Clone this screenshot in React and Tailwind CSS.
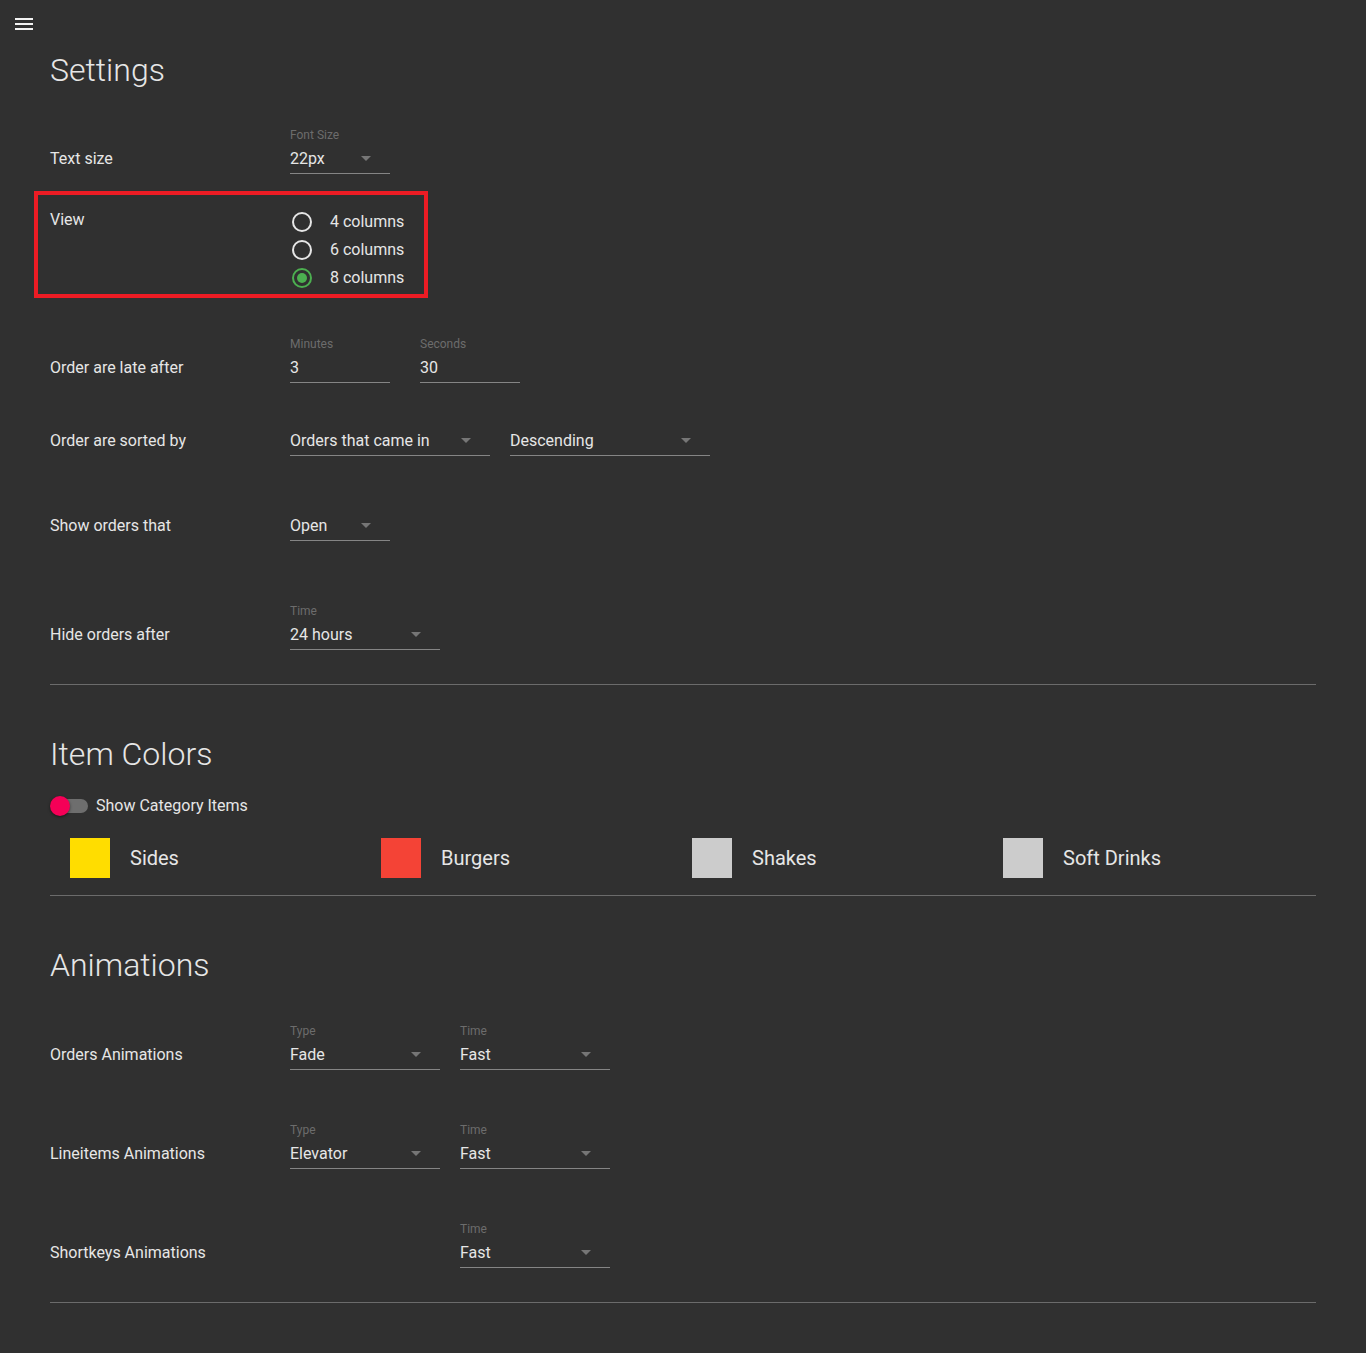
import React from "react";

function Arrow() {
  return (
    <svg width="10" height="5" viewBox="0 0 10 5" className="mr-[19px] shrink-0">
      <path d="M0 0 L10 0 L5 5 Z" fill="#767676" />
    </svg>
  );
}

function Field({ label, value, w, arrow = true }) {
  return (
    <div className={"flex flex-col " + w}>
      {label && (
        <div className="text-[12px] leading-[16px] text-[#6c6c6c] mb-[3px]">{label}</div>
      )}
      <div className="flex items-center justify-between h-[28px] pb-[2px] border-b border-[#858585]">
        <span className="text-[16px] leading-[24px]">{value}</span>
        {arrow && <Arrow />}
      </div>
    </div>
  );
}

function Row({ label, mt, children }) {
  return (
    <div className={"flex items-end " + mt}>
      <div className="w-[240px] pb-[3px] text-[16px] leading-[24px]">{label}</div>
      {children}
    </div>
  );
}

function Radio({ checked, label }) {
  return (
    <div className="flex items-center h-[28px]">
      {checked ? (
        <div className="w-[20px] h-[20px] rounded-full border-2 border-[#4caf50] flex items-center justify-center">
          <div className="w-[10px] h-[10px] rounded-full bg-[#4caf50]" />
        </div>
      ) : (
        <div className="w-[20px] h-[20px] rounded-full border-2 border-[#e6e6e6]" />
      )}
      <span className="ml-[18px] text-[16px] leading-[24px]">{label}</span>
    </div>
  );
}

function Swatch({ color, label }) {
  return (
    <div className="flex items-center gap-[20px]">
      <div className={"w-[40px] h-[40px] " + color} />
      <span className="text-[20px] leading-[24px]">{label}</span>
    </div>
  );
}

export default function App() {
  return (
    <div className="min-h-screen bg-[#303030] text-[#e6e6e6] font-['Roboto',sans-serif] pb-[50px]">
      <div className="h-[54px] pt-[18px] pl-[15px]">
        <svg width="18" height="12" viewBox="0 0 18 12">
          <rect x="0" y="0" width="18" height="2" fill="#f2f2f2" />
          <rect x="0" y="5" width="18" height="2" fill="#f2f2f2" />
          <rect x="0" y="10" width="18" height="2" fill="#f2f2f2" />
        </svg>
      </div>
      <div className="px-[50px]">
        <h1 className="text-[32px] leading-[32px] font-light">Settings</h1>

        <Row label="Text size" mt="mt-[41px]">
          <Field label="Font Size" value="22px" w="w-[100px]" />
        </Row>

        <div className="mt-[17px] -ml-[16px] w-[394px] h-[107px] border-4 border-[#ec1c24] pl-[12px] pt-[13px] flex items-start">
          <div className="w-[242px] text-[16px] leading-[24px]">View</div>
          <div className="flex flex-col">
            <Radio label="4 columns" />
            <Radio label="6 columns" />
            <Radio label="8 columns" checked />
          </div>
        </div>

        <Row label="Order are late after" mt="mt-[38px]">
          <div className="flex gap-[30px]">
            <Field label="Minutes" value="3" w="w-[100px]" arrow={false} />
            <Field label="Seconds" value="30" w="w-[100px]" arrow={false} />
          </div>
        </Row>

        <Row label="Order are sorted by" mt="mt-[45px]">
          <div className="flex gap-[20px]">
            <Field value="Orders that came in" w="w-[200px]" />
            <Field value="Descending" w="w-[200px]" />
          </div>
        </Row>

        <Row label="Show orders that" mt="mt-[57px]">
          <Field value="Open" w="w-[100px]" />
        </Row>

        <Row label="Hide orders after" mt="mt-[62px]">
          <Field label="Time" value="24 hours" w="w-[150px]" />
        </Row>

        <div className="mt-[34px] h-px bg-[#6b6b6b]" />

        <h2 className="mt-[53px] text-[32px] leading-[32px] font-light">Item Colors</h2>

        <div className="mt-[26px] flex items-center">
          <div className="relative w-[38px] h-[20px]">
            <div className="absolute left-[4px] top-[3px] w-[34px] h-[14px] rounded-full bg-[#6e6e6e]" />
            <div className="absolute left-0 top-0 w-[20px] h-[20px] rounded-full bg-[#f50057] shadow-[0_1px_3px_rgba(0,0,0,0.5)]" />
          </div>
          <span className="ml-[8px] text-[16px] leading-[20px]">Show Category Items</span>
        </div>

        <div className="mt-[22px] pl-[20px] pr-[2px] grid grid-cols-4">
          <Swatch color="bg-[#ffdd00]" label="Sides" />
          <Swatch color="bg-[#f44336]" label="Burgers" />
          <Swatch color="bg-[#cccccc]" label="Shakes" />
          <Swatch color="bg-[#cccccc]" label="Soft Drinks" />
        </div>

        <div className="mt-[17px] h-px bg-[#6b6b6b]" />

        <h2 className="mt-[53px] text-[32px] leading-[32px] font-light">Animations</h2>

        <Row label="Orders Animations" mt="mt-[42px]">
          <div className="flex gap-[20px]">
            <Field label="Type" value="Fade" w="w-[150px]" />
            <Field label="Time" value="Fast" w="w-[150px]" />
          </div>
        </Row>

        <Row label="Lineitems Animations" mt="mt-[52px]">
          <div className="flex gap-[20px]">
            <Field label="Type" value="Elevator" w="w-[150px]" />
            <Field label="Time" value="Fast" w="w-[150px]" />
          </div>
        </Row>

        <Row label="Shortkeys Animations" mt="mt-[52px]">
          <div className="flex gap-[20px]">
            <div className="w-[150px]" />
            <Field label="Time" value="Fast" w="w-[150px]" />
          </div>
        </Row>

        <div className="mt-[34px] h-px bg-[#6b6b6b]" />
      </div>
    </div>
  );
}
